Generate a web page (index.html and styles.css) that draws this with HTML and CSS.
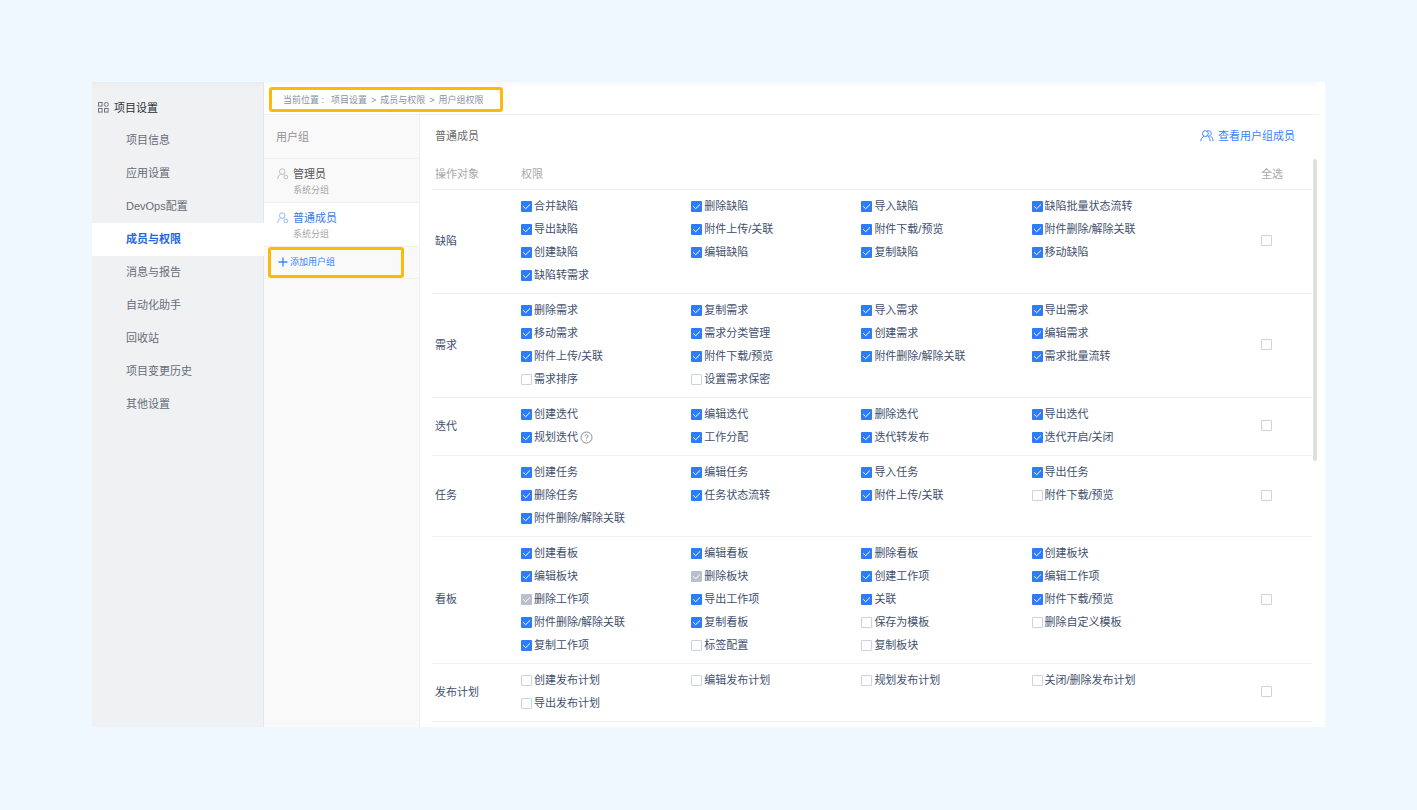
FILE: index.html
```html
<!DOCTYPE html>
<html lang="zh-CN">
<head>
<meta charset="utf-8">
<meta name="viewport" content="width=device-width, initial-scale=1">
<title>用户组权限</title>
<link rel="stylesheet" href="styles.css">
</head>
<body>
<div class="app">
  <nav class="sidebar" aria-label="项目设置">
    <h1 class="sidebar-title">
      <svg class="icon-grid" viewBox="0 0 11 11" aria-hidden="true"><rect x="0.5" y="0.5" width="3.6" height="3.6"/><circle cx="8.3" cy="2.4" r="2"/><rect x="0.5" y="6.5" width="3.6" height="3.6"/><rect x="6.5" y="6.5" width="3.6" height="3.6"/></svg>
      项目设置
    </h1>
    <a class="nav-item" href="#">项目信息</a>
    <a class="nav-item" href="#">应用设置</a>
    <a class="nav-item" href="#">DevOps配置</a>
    <a class="nav-item nav-item-active" href="#" aria-current="page">成员与权限</a>
    <a class="nav-item" href="#">消息与报告</a>
    <a class="nav-item" href="#">自动化助手</a>
    <a class="nav-item" href="#">回收站</a>
    <a class="nav-item" href="#">项目变更历史</a>
    <a class="nav-item" href="#">其他设置</a>
  </nav>

  <div class="content">
    <header class="topbar">
      <div class="breadcrumb">
        <span class="crumb-label">当前位置 :</span>
        <a href="#">项目设置</a><span>&gt;</span><a href="#">成员与权限</a><span>&gt;</span><a href="#">用户组权限</a>
      </div>
    </header>

    <div class="panels">
      <aside class="groups">
        <h2 class="groups-title">用户组</h2>
        <a class="group" href="#">
          <svg class="icon-user" viewBox="0 0 12 12" aria-hidden="true"><circle cx="5.2" cy="3.6" r="2.8"/><path d="M3.6 6.2C1.8 7 1 8.6 0.8 11"/><path d="M6.4 6.2l1 .7"/><circle cx="8.8" cy="8.9" r="1.9"/></svg>
          <span class="group-name">管理员</span>
          <span class="group-kind">系统分组</span>
        </a>
        <a class="group group-active" href="#">
          <svg class="icon-user" viewBox="0 0 12 12" aria-hidden="true"><circle cx="5.2" cy="3.6" r="2.8"/><path d="M3.6 6.2C1.8 7 1 8.6 0.8 11"/><path d="M6.4 6.2l1 .7"/><circle cx="8.8" cy="8.9" r="1.9"/></svg>
          <span class="group-name">普通成员</span>
          <span class="group-kind">系统分组</span>
        </a>
        <div class="group-add">
          <button class="add-button" type="button">
            <svg class="icon-plus" viewBox="0 0 10 10" aria-hidden="true"><path d="M5 0.500v9M0.500 5h9"/></svg>
            添加用户组
          </button>
        </div>
      </aside>

      <main class="detail">
        <div class="detail-head">
          <h2 class="detail-title">普通成员</h2>
          <a class="members-link" href="#">
            <svg class="icon-users" viewBox="0 0 14 12" aria-hidden="true"><circle cx="5.400" cy="3.600" r="2.900"/><path d="M0.800 11.200C1 9 2 7.400 3.800 6.200"/><path d="M7.200 0.900C10.200 0 12 2.600 10.800 4.800 10.200 5.900 9 6.400 7.800 6.200M8 6.400C9.400 7.400 10 9 10.200 11.200M10.800 6.200C12.200 7.400 12.900 9 13.100 11.200"/></svg>
            查看用户组成员
          </a>
        </div>

        <div class="scroller">
          <table class="permissions">
            <colgroup><col class="col-object"><col><col class="col-all"></colgroup>
            <thead>
              <tr><th scope="col">操作对象</th><th scope="col">权限</th><th scope="col">全选</th></tr>
            </thead>
            <tbody>
              <tr>
                <th scope="row">缺陷</th>
                <td><div class="options">
                  <label><input type="checkbox" checked>合并缺陷</label>
                  <label><input type="checkbox" checked>删除缺陷</label>
                  <label><input type="checkbox" checked>导入缺陷</label>
                  <label><input type="checkbox" checked>缺陷批量状态流转</label>
                  <label><input type="checkbox" checked>导出缺陷</label>
                  <label><input type="checkbox" checked>附件上传/关联</label>
                  <label><input type="checkbox" checked>附件下载/预览</label>
                  <label><input type="checkbox" checked>附件删除/解除关联</label>
                  <label><input type="checkbox" checked>创建缺陷</label>
                  <label><input type="checkbox" checked>编辑缺陷</label>
                  <label><input type="checkbox" checked>复制缺陷</label>
                  <label><input type="checkbox" checked>移动缺陷</label>
                  <label><input type="checkbox" checked>缺陷转需求</label>
                </div></td>
                <td><input type="checkbox" aria-label="全选缺陷"></td>
              </tr>
              <tr>
                <th scope="row">需求</th>
                <td><div class="options">
                  <label><input type="checkbox" checked>删除需求</label>
                  <label><input type="checkbox" checked>复制需求</label>
                  <label><input type="checkbox" checked>导入需求</label>
                  <label><input type="checkbox" checked>导出需求</label>
                  <label><input type="checkbox" checked>移动需求</label>
                  <label><input type="checkbox" checked>需求分类管理</label>
                  <label><input type="checkbox" checked>创建需求</label>
                  <label><input type="checkbox" checked>编辑需求</label>
                  <label><input type="checkbox" checked>附件上传/关联</label>
                  <label><input type="checkbox" checked>附件下载/预览</label>
                  <label><input type="checkbox" checked>附件删除/解除关联</label>
                  <label><input type="checkbox" checked>需求批量流转</label>
                  <label><input type="checkbox">需求排序</label>
                  <label><input type="checkbox">设置需求保密</label>
                </div></td>
                <td><input type="checkbox" aria-label="全选需求"></td>
              </tr>
              <tr>
                <th scope="row">迭代</th>
                <td><div class="options">
                  <label><input type="checkbox" checked>创建迭代</label>
                  <label><input type="checkbox" checked>编辑迭代</label>
                  <label><input type="checkbox" checked>删除迭代</label>
                  <label><input type="checkbox" checked>导出迭代</label>
                  <label><input type="checkbox" checked>规划迭代
                    <svg class="icon-help" viewBox="0 0 13 13" aria-hidden="true"><circle cx="6.500" cy="6.500" r="5.500"/><path d="M5 5.300C5 3.300 8 3.300 8 5.200 8 6.300 6.500 6.300 6.500 7.600M6.500 8.800v.9"/></svg></label>
                  <label><input type="checkbox" checked>工作分配</label>
                  <label><input type="checkbox" checked>迭代转发布</label>
                  <label><input type="checkbox" checked>迭代开启/关闭</label>
                </div></td>
                <td><input type="checkbox" aria-label="全选迭代"></td>
              </tr>
              <tr>
                <th scope="row">任务</th>
                <td><div class="options">
                  <label><input type="checkbox" checked>创建任务</label>
                  <label><input type="checkbox" checked>编辑任务</label>
                  <label><input type="checkbox" checked>导入任务</label>
                  <label><input type="checkbox" checked>导出任务</label>
                  <label><input type="checkbox" checked>删除任务</label>
                  <label><input type="checkbox" checked>任务状态流转</label>
                  <label><input type="checkbox" checked>附件上传/关联</label>
                  <label><input type="checkbox">附件下载/预览</label>
                  <label><input type="checkbox" checked>附件删除/解除关联</label>
                </div></td>
                <td><input type="checkbox" aria-label="全选任务"></td>
              </tr>
              <tr>
                <th scope="row">看板</th>
                <td><div class="options">
                  <label><input type="checkbox" checked>创建看板</label>
                  <label><input type="checkbox" checked>编辑看板</label>
                  <label><input type="checkbox" checked>删除看板</label>
                  <label><input type="checkbox" checked>创建板块</label>
                  <label><input type="checkbox" checked>编辑板块</label>
                  <label><input type="checkbox" checked disabled>删除板块</label>
                  <label><input type="checkbox" checked>创建工作项</label>
                  <label><input type="checkbox" checked>编辑工作项</label>
                  <label><input type="checkbox" checked disabled>删除工作项</label>
                  <label><input type="checkbox" checked>导出工作项</label>
                  <label><input type="checkbox" checked>关联</label>
                  <label><input type="checkbox" checked>附件下载/预览</label>
                  <label><input type="checkbox" checked>附件删除/解除关联</label>
                  <label><input type="checkbox" checked>复制看板</label>
                  <label><input type="checkbox">保存为模板</label>
                  <label><input type="checkbox">删除自定义模板</label>
                  <label><input type="checkbox" checked>复制工作项</label>
                  <label><input type="checkbox">标签配置</label>
                  <label><input type="checkbox">复制板块</label>
                </div></td>
                <td><input type="checkbox" aria-label="全选看板"></td>
              </tr>
              <tr>
                <th scope="row">发布计划</th>
                <td><div class="options">
                  <label><input type="checkbox">创建发布计划</label>
                  <label><input type="checkbox">编辑发布计划</label>
                  <label><input type="checkbox">规划发布计划</label>
                  <label><input type="checkbox">关闭/删除发布计划</label>
                  <label><input type="checkbox">导出发布计划</label>
                </div></td>
                <td><input type="checkbox" aria-label="全选发布计划"></td>
              </tr>
            </tbody>
          </table>
          <div class="scrollbar"><div class="scrollbar-thumb"></div></div>
        </div>
      </main>
    </div>
  </div>
</div>
</body>
</html>
```
FILE: styles.css
```css
* {
  box-sizing: border-box;
}

body {
  display: flex;
  min-height: 100vh;
  margin: 0;
  padding: 82px 92px 83px;
  background: #eff7ff;
  color: #42506d;
  font: 11px/16px "Liberation Sans", "Noto Sans CJK SC", sans-serif;
}

h1,
h2 {
  margin: 0;
  font-size: 11px;
  font-weight: 400;
}

a {
  color: inherit;
  text-decoration: none;
}

svg {
  flex: none;
  fill: none;
  stroke: currentColor;
}

.app {
  display: flex;
  flex: 1;
  background: #fff;
}

/* Project navigation */
.sidebar {
  flex: none;
  width: 172px;
  padding-top: 9px;
  background: linear-gradient(#e9ecef, #f0f1f3 7px);
  box-shadow: inset -1px 0 #e4e6ea;
  color: #666d78;
}

.sidebar-title {
  display: flex;
  align-items: center;
  gap: 5px;
  height: 33px;
  padding-left: 6px;
  color: #2b3038;
}

.icon-grid {
  width: 11px;
  height: 11px;
  color: #707782;
}

.nav-item {
  display: flex;
  align-items: center;
  height: 33px;
  padding: 0 0 2px 34px;
}

.nav-item-active {
  background: #fff;
  color: #2468dc;
  font-weight: 700;
}

/* Location bar */
.content {
  display: flex;
  flex: 1;
  flex-direction: column;
  min-width: 0;
}

.topbar {
  display: flex;
  height: 33px;
  margin-right: 7px;
  padding: 5px 5px 0;
  border-bottom: 1px solid #eceded;
  background: linear-gradient(#f8fafb, #fff 6px);
}

.breadcrumb {
  display: flex;
  align-items: center;
  gap: 4px;
  height: 25px;
  padding: 0 16px 0 11px;
  border: 3px solid #ffb90a;
  border-radius: 3px;
  color: #8a90a0;
  font-size: 9px;
}

.crumb-label {
  margin-right: 3px;
}

.panels {
  display: flex;
  flex: 1;
}

/* User groups */
.groups {
  flex: none;
  width: 156px;
  border-right: 1px solid #f0f0f0;
  background: #f9f9f9;
}

.groups-title {
  display: flex;
  align-items: center;
  height: 44px;
  padding-left: 12px;
  border-bottom: 1px solid #f0f0f0;
  color: #939393;
}

.group {
  display: grid;
  grid-template-columns: 12px 1fr;
  column-gap: 4px;
  align-content: center;
  align-items: center;
  height: 44px;
  padding: 2px 0 0 13px;
  border-bottom: 1px solid #f0f0f0;
  color: #565656;
}

.group-active {
  background: #fff;
  color: #3a7be6;
}

.icon-user {
  width: 12px;
  height: 12px;
  color: #bcbec2;
}

.group-active .icon-user {
  color: #8fb8f8;
}

.group-kind {
  grid-column: 2;
  color: #a6a6a6;
  font-size: 9px;
}

.group-add {
  padding: 0 15px 0 4px;
  border-bottom: 1px solid #f0f0f0;
}

.add-button {
  display: flex;
  align-items: center;
  gap: 2px;
  width: 100%;
  height: 31px;
  padding: 0 7px 2px;
  border: 3px solid #ffb90a;
  border-radius: 3px;
  background: transparent;
  color: #3a83fa;
  font: inherit;
  font-size: 9px;
}

.icon-plus {
  width: 10px;
  height: 10px;
  stroke-width: 1.3;
}

/* Group permissions */
.detail {
  flex: 1;
  min-width: 0;
  padding: 0 8px 0 12px;
}

.detail-head {
  display: flex;
  align-items: center;
  justify-content: space-between;
  height: 42px;
  padding: 0 22px 0 3px;
}

.detail-title {
  color: #6a6a6a;
}

.members-link {
  display: flex;
  align-items: center;
  gap: 4px;
  color: #3a83fa;
}

.icon-users {
  width: 14px;
  height: 12px;
}

.scroller {
  display: flex;
  gap: 1px;
}

.permissions {
  flex: 1;
  table-layout: fixed;
  border-collapse: collapse;
}

.col-object {
  width: 89px;
}

.col-all {
  width: 51px;
}

.permissions th,
.permissions td {
  padding: 5px 0 6px;
  border-bottom: 1px solid #f0f0f0;
  font-weight: 400;
  text-align: left;
  vertical-align: middle;
}

.permissions thead th {
  height: 32px;
  padding: 7px 0 5px;
  color: #a8a8a8;
}

.permissions th:first-child {
  padding-left: 3px;
}

.options {
  display: grid;
  grid-template-columns: repeat(4, 23%);
}

.options label {
  display: flex;
  align-items: center;
  gap: 2px;
  height: 23px;
}

input[type="checkbox"] {
  display: block;
  flex: none;
  width: 11px;
  height: 11px;
  margin: 0;
  border: 1px solid #ccd3de;
  border-radius: 1px;
  background: #fff;
  appearance: none;
}

input[type="checkbox"]:checked {
  border: 0;
  background: #2d7dfb url("data:image/svg+xml,%3Csvg xmlns='http://www.w3.org/2000/svg' viewBox='0 0 11 11'%3E%3Cpath d='M2.200 5.300L4.700 7.700 9 3.400' fill='none' stroke='white'/%3E%3C/svg%3E");
}

input[type="checkbox"]:checked:disabled {
  background-color: #b9c0cc;
}

.icon-help {
  width: 13px;
  height: 13px;
  color: #858c9c;
}

.scrollbar {
  flex: none;
  width: 4px;
  padding-top: 2px;
}

.scrollbar-thumb {
  height: 302px;
  border-radius: 2px;
  background: #e0e0e0;
}
```
